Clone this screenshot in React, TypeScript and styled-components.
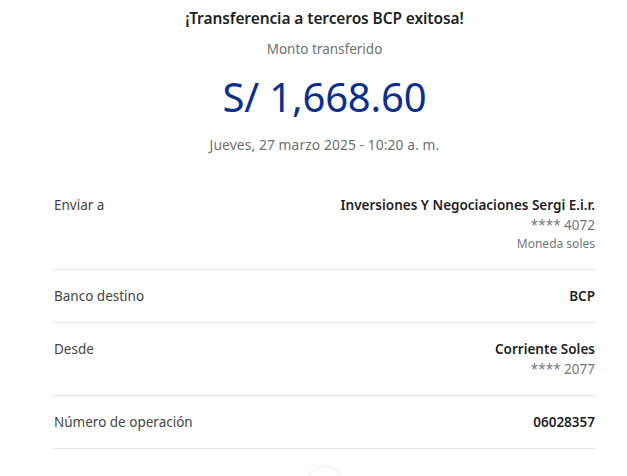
import React from "react";
import styled, { createGlobalStyle } from "styled-components";

const Global = createGlobalStyle`
  html, body { margin: 0; padding: 0; background: #ffffff; }
  body { font-family: "Noto Sans", "Open Sans", sans-serif; -webkit-font-smoothing: antialiased; }
`;

const Page = styled.div`
  width: 627px;
  height: 476px;
  overflow: hidden;
  box-sizing: border-box;
  padding: 0 31px 0 53px;
  display: flex;
  flex-direction: column;
`;

const Header = styled.header`
  display: flex;
  flex-direction: column;
  align-items: center;
  padding-top: 7px;
`;

const Title = styled.h1`
  margin: 0;
  font-size: 15.5px;
  line-height: 22px;
  font-weight: 600;
  color: #1f1f1f;
  letter-spacing: -0.1px;
`;

const Subtitle = styled.div`
  margin-top: 10px;
  font-size: 13.5px;
  line-height: 20px;
  color: #6f6f6f;
`;

const Amount = styled.div`
  margin-top: 15px;
  font-size: 40px;
  line-height: 46px;
  font-weight: 400;
  color: #0d2f8c;
  letter-spacing: -0.2px;
`;

const DateText = styled.div`
  margin-top: 15px;
  font-size: 13.8px;
  line-height: 20px;
  color: #6f6f6f;
  letter-spacing: 0.1px;
`;

const List = styled.div`
  margin-top: 24px;
  display: flex;
  flex-direction: column;
`;

const Row = styled.div`
  display: flex;
  justify-content: space-between;
  align-items: flex-start;
  padding: 16px 1px 16px 1px;
  border-bottom: 1px solid #e6e6e6;
`;

const Label = styled.div`
  font-size: 13.5px;
  line-height: 20px;
  color: #444444;
`;

const Values = styled.div`
  display: flex;
  flex-direction: column;
  align-items: flex-end;
`;

const Strong = styled.div`
  font-size: 13.5px;
  line-height: 20px;
  font-weight: 600;
  color: #1f1f1f;
`;

const Muted = styled.div<{ $small?: boolean }>`
  font-size: ${(p) => (p.$small ? "12px" : "13.5px")};
  line-height: ${(p) => (p.$small ? "18px" : "20px")};
  color: #757575;
`;

const Footer = styled.div`
  display: flex;
  justify-content: center;
  padding-top: 18px;
`;

const RoundButton = styled.div`
  width: 34px;
  height: 34px;
  border-radius: 50%;
  background: #ffffff;
  box-shadow: 0 0 4px rgba(0, 0, 0, 0.1);
`;

type Item = { label: string; main: string; subs?: { text: string; small?: boolean }[] };

const items: Item[] = [
  {
    label: "Enviar a",
    main: "Inversiones Y Negociaciones Sergi E.i.r.",
    subs: [{ text: "**** 4072" }, { text: "Moneda soles", small: true }],
  },
  { label: "Banco destino", main: "BCP" },
  { label: "Desde", main: "Corriente Soles", subs: [{ text: "**** 2077" }] },
  { label: "Número de operación", main: "06028357" },
];

export default function App() {
  return (
    <>
      <Global />
      <Page>
        <Header>
          <Title>¡Transferencia a terceros BCP exitosa!</Title>
          <Subtitle>Monto transferido</Subtitle>
          <Amount>S/ 1,668.60</Amount>
          <DateText>Jueves, 27 marzo 2025 - 10:20 a. m.</DateText>
        </Header>
        <List>
          {items.map((it) => (
            <Row key={it.label}>
              <Label>{it.label}</Label>
              <Values>
                <Strong>{it.main}</Strong>
                {it.subs?.map((s) => (
                  <Muted key={s.text} $small={s.small}>
                    {s.text}
                  </Muted>
                ))}
              </Values>
            </Row>
          ))}
        </List>
        <Footer>
          <RoundButton />
        </Footer>
      </Page>
    </>
  );
}
